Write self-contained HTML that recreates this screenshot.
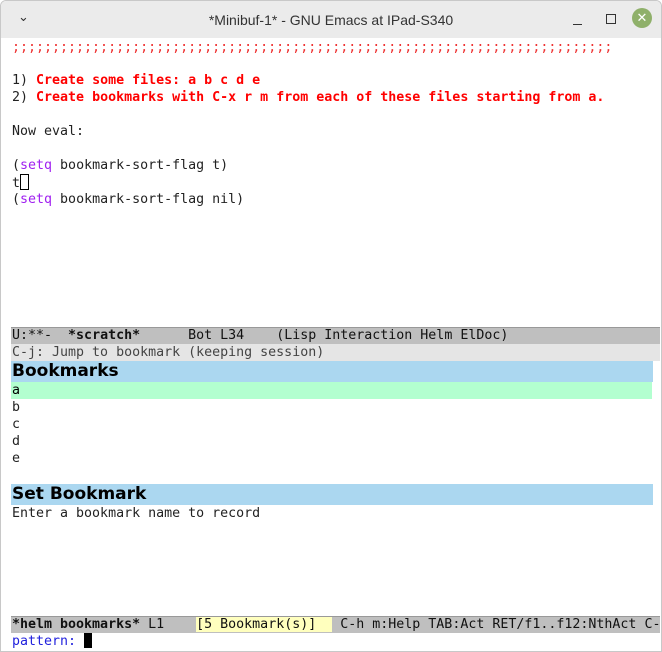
<html><head><style>
body{margin:0;width:662px;height:652px;background:#fff;overflow:hidden;font-family:"DejaVu Sans Mono",monospace;font-size:13.3px;position:relative}
.win{position:absolute;left:0;top:0;width:660px;height:650px;border:1px solid #c8c8c8;border-radius:6px 6px 0 0;overflow:hidden}
.tb{position:absolute;left:0;top:0;width:660px;height:37px;background:#ebebeb;font-family:"Liberation Sans",sans-serif;font-size:14px;color:#333}
.l{position:absolute;left:11px;height:17px;line-height:17px;white-space:pre;color:#222}
.r{color:#f00;font-weight:bold}
.bar{position:absolute;left:10px;width:649px;height:17px;line-height:17px;white-space:pre;padding-left:1px;box-sizing:border-box}
.hd{position:absolute;left:10px;width:641px;height:21px;background:#abd7f0;font-family:"DejaVu Sans",sans-serif;font-weight:bold;font-size:17px;line-height:21px;padding-left:1px;color:#000}
</style></head><body><div class="win">
<div class="tb"><span style="position:absolute;left:17px;top:8px;font-size:13px">&#8964;</span>
<div style="position:absolute;left:0;width:660px;top:11px;text-align:center">*Minibuf-1* - GNU Emacs at IPad-S340</div>
<div style="position:absolute;left:572px;top:23px;width:9px;height:1px;background:#333"></div>
<div style="position:absolute;left:605px;top:13px;width:8px;height:8px;border:1px solid #333"></div>
<div style="position:absolute;left:631px;top:7px;width:20px;height:20px;border-radius:50%;background:#8fb06a;color:#fff;text-align:center;line-height:20px;font-size:13px">✕</div></div>
<div class="l" style="top:38px;color:#e33">;;;;;;;;;;;;;;;;;;;;;;;;;;;;;;;;;;;;;;;;;;;;;;;;;;;;;;;;;;;;;;;;;;;;;;;;;;;</div>
<div class="l" style="top:71px">1) <span class="r">Create some files: a b c d e</span></div>
<div class="l" style="top:88px">2) <span class="r">Create bookmarks with C-x r m from each of these files starting from a.</span></div>
<div class="l" style="top:122px">Now eval:</div>
<div class="l" style="top:156px">(<span style="color:#a020f0">setq</span> bookmark-sort-flag t)</div>
<div class="l" style="top:173px">t<span style="display:inline-block;width:7px;height:14px;border:1px solid #000;vertical-align:-3px"></span></div>
<div class="l" style="top:190px">(<span style="color:#a020f0">setq</span> bookmark-sort-flag nil)</div>
<div class="bar" style="top:326px;background:#bfbfbf;color:#111;border-top:1px solid #999;height:17px;line-height:16px">U:**-  <b>*scratch*</b>      Bot L34    (Lisp Interaction Helm ElDoc)</div>
<div class="bar" style="top:343px;background:#e5e5e5;color:#444">C-j: Jump to bookmark (keeping session)</div>
<div class="hd" style="top:360px">Bookmarks</div>
<div class="bar" style="top:381px;background:#b3ffd0;width:641px">a</div>
<div class="l" style="top:398px">b</div><div class="l" style="top:415px">c</div><div class="l" style="top:432px">d</div><div class="l" style="top:449px">e</div>
<div class="hd" style="top:483px">Set Bookmark</div>
<div class="l" style="top:504px">Enter a bookmark name to record</div>
<div class="bar" style="top:615px;background:#bfbfbf;color:#111;border-top:1px solid #999;height:17px;line-height:16px"><b>*helm bookmarks*</b> L1    <span style="background:#ffffbe">[5 Bookmark(s)]  </span> C-h m:Help TAB:Act RET/f1..f12:NthAct C-</div>
<div class="l" style="top:632px;color:#2222dd">pattern: <span style="display:inline-block;width:8px;height:15px;background:#000;vertical-align:-3px"></span></div>
</div></body></html>
